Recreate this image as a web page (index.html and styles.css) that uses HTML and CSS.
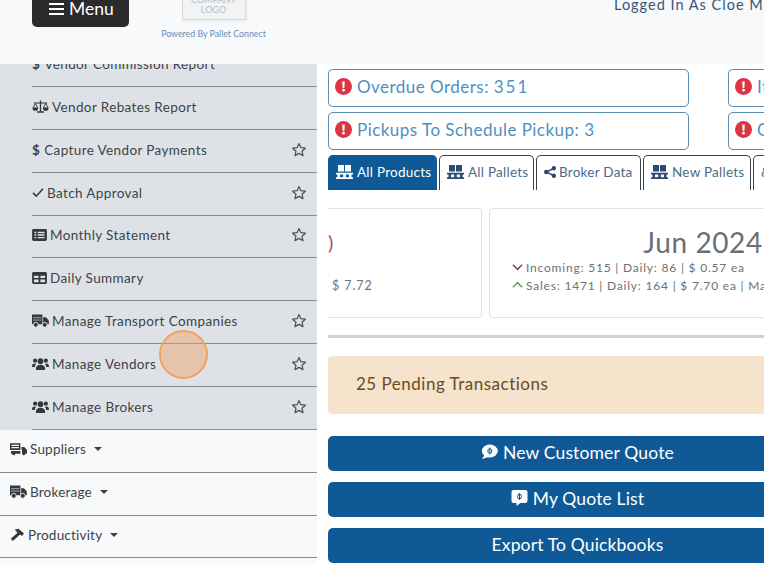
FILE: index.html
```html
<!DOCTYPE html>
<html>
<head>
<meta charset="utf-8">
<title>Dashboard</title>
<link rel="stylesheet" href="styles.css">
</head>
<body>
<svg class="defs" width="0" height="0">
<symbol id="i-star" viewBox="0 0 16 16"><path d="M8 1.600l1.900 4.100 4.500.5-3.400 3 1 4.400L8 11.400l-4 2.200 1-4.400-3.400-3 4.500-.5z" fill="none" stroke="currentColor" stroke-width="1.200" stroke-linejoin="round"/></symbol>
<symbol id="i-scale" viewBox="0 0 18 14"><path d="M8.300 0h1.400v11.500h3V13H5.300v-1.500h3z M2 2.200h14v1.100H2z" fill="currentColor"/><path d="M3.500 3L1 8h5z M14.500 3L12 8h5z" fill="none" stroke="currentColor" stroke-width="1"/><path d="M.5 8h6a3 3 0 0 1-6 0z M11.500 8h6a3 3 0 0 1-6 0z" fill="currentColor"/></symbol>
<symbol id="i-check" viewBox="0 0 14 12"><path d="M1.200 6.500l3.800 3.800 7.800-8.600" fill="none" stroke="currentColor" stroke-width="1.900"/></symbol>
<symbol id="i-list" viewBox="0 0 16 13"><path fill-rule="evenodd" d="M1.500 0h13A1.500 1.500 0 0 1 16 1.500v10a1.500 1.500 0 0 1-1.500 1.500h-13A1.500 1.500 0 0 1 0 11.500v-10A1.500 1.500 0 0 1 1.500 0z M2.500 3v1.500h2V3z M6 3v1.500h7.500V3z M2.500 5.800v1.500h2V5.800z M6 5.800v1.500h7.500V5.800z M2.500 8.600v1.500h2V8.600z M6 8.600v1.500h7.500V8.600z" fill="currentColor"/></symbol>
<symbol id="i-table" viewBox="0 0 16 13"><path fill-rule="evenodd" d="M1.500 0h13A1.500 1.500 0 0 1 16 1.500v10a1.500 1.500 0 0 1-1.500 1.500h-13A1.500 1.500 0 0 1 0 11.500v-10A1.500 1.500 0 0 1 1.500 0z M2 4v2.500h5V4z M9 4v2.500h5V4z M2 8v3h5V8z M9 8v3h5V8z" fill="currentColor"/></symbol>
<symbol id="i-truck" viewBox="0 0 18 14"><path d="M0 0h11v10.500H0z M11.800 3h3l3 3.500v4h-6z" fill="currentColor"/><path d="M1 3.500h9M1 6h9" stroke="#dee2e6" stroke-width=".7"/><circle cx="4" cy="11" r="2.600" fill="currentColor" stroke="#dee2e6"/><circle cx="13.500" cy="11" r="2.600" fill="currentColor" stroke="#dee2e6"/></symbol>
<symbol id="i-users" viewBox="0 0 18 14"><circle cx="3.300" cy="3.500" r="2.200"/><circle cx="14.700" cy="3.500" r="2.200"/><circle cx="9" cy="4" r="3"/><path d="M0 9.800c0-2.200 1-3.300 2.500-3.300.8 0 1.300.2 1.800.6C3.500 8 3 9 3 10.200H.5z M18 9.800c0-2.200-1-3.300-2.500-3.300-.8 0-1.300.2-1.800.6.800.9 1.300 1.900 1.300 3.100h2.500z M4 12.400c0-2.900 1.900-4.700 5-4.700s5 1.800 5 4.700c0 .6-.4 1-1 1H5c-.6 0-1-.4-1-1z"/></symbol>
<symbol id="i-dolly" viewBox="0 0 18 14"><path fill-rule="evenodd" d="M0 1h11v7H0z M1.500 2.500v1.200h8V2.500z M1.500 5v1.200h8V5z" fill="currentColor"/><path d="M1 9h10v3H1z M12 5h3l3 3v4h-5z" fill="currentColor"/><circle cx="4" cy="12" r="1.600" fill="currentColor"/><circle cx="14.500" cy="12" r="1.600" fill="currentColor"/></symbol>
<symbol id="i-hammer" viewBox="0 0 16 14"><path d="M5 1.500l4-.7 6 5-2.200 2.700-2-1.600L3 14 .8 11.700 8 5z" fill="currentColor"/></symbol>
<symbol id="i-alert" viewBox="0 0 16 16"><circle cx="8" cy="8" r="8" fill="#dc3545"/><path d="M6.800 3.300h2.400l-.4 6H7.200z" fill="#fff"/><circle cx="8" cy="11.500" r="1.300" fill="#fff"/></symbol>
<symbol id="i-pallet" viewBox="0 0 17 14"><path d="M2 0h6v6.500H2z M9 0h6v6.500H9z M0 7.800h17v1.700H0z M0 12.300h17V14H0z M1.500 9.500H4v2.800H1.500z M7.200 9.500h2.600v2.800H7.200z M13 9.500h2.500v2.800H13z" fill="currentColor"/></symbol>
<symbol id="i-share" viewBox="0 0 12 12"><circle cx="9.800" cy="2.300" r="2.200"/><circle cx="9.800" cy="9.700" r="2.200"/><circle cx="2.300" cy="6" r="2.300"/><path d="M2.300 6l7.500-3.700M2.300 6l7.500 3.700" stroke="currentColor" stroke-width="1.400"/></symbol>
<symbol id="i-quote" viewBox="0 0 17 15"><ellipse cx="8.800" cy="6.500" rx="8" ry="6.500" fill="#fff"/><path d="M4 10L.8 14.500 8 12.500z" fill="#fff"/><path d="M8.800 3v7" stroke="#0f5a96" stroke-width="1"/><ellipse cx="8.800" cy="6.500" rx="2" ry="2.300" fill="none" stroke="#0f5a96" stroke-width="1"/></symbol>
<symbol id="i-quotebox" viewBox="0 0 16 16"><path d="M2 0h12a2 2 0 0 1 2 2v9a2 2 0 0 1-2 2H9l-4 3v-3H2a2 2 0 0 1-2-2V2a2 2 0 0 1 2-2z" fill="#fff"/><path d="M8 3v7" stroke="#0f5a96" stroke-width="1"/><ellipse cx="8" cy="6.500" rx="2" ry="2.300" fill="none" stroke="#0f5a96" stroke-width="1"/></symbol>
</svg>

<header class="topbar">
  <div class="brand-left">
    <button class="menu-btn"><span class="menu-bars"><i></i><i></i><i></i></span>Menu</button>
  </div>
  <div class="brand">
    <div class="logo">COMPANY<br>LOGO</div>
    <div class="powered">Powered By Pallet Connect</div>
  </div>
  <div class="login">Logged In As Cloe Miller</div>
</header>

<div class="page">
  <nav class="sidebar">
    <ul class="sub-list">
      <li class="sub-item"><span class="glyph">$</span>Vendor Commission Report</li>
      <li class="sub-item"><svg class="ic ic-w"><use href="#i-scale"/></svg>Vendor Rebates Report</li>
      <li class="sub-item"><span class="glyph">$</span>Capture Vendor Payments<svg class="star"><use href="#i-star"/></svg></li>
      <li class="sub-item"><svg class="ic ic-c"><use href="#i-check"/></svg>Batch Approval<svg class="star"><use href="#i-star"/></svg></li>
      <li class="sub-item"><svg class="ic ic-l"><use href="#i-list"/></svg>Monthly Statement<svg class="star"><use href="#i-star"/></svg></li>
      <li class="sub-item"><svg class="ic ic-l"><use href="#i-table"/></svg>Daily Summary</li>
      <li class="sub-item"><svg class="ic ic-w"><use href="#i-truck"/></svg>Manage Transport Companies<svg class="star"><use href="#i-star"/></svg></li>
      <li class="sub-item"><svg class="ic ic-w"><use href="#i-users"/></svg>Manage Vendors<svg class="star"><use href="#i-star"/></svg></li>
      <li class="sub-item"><svg class="ic ic-w"><use href="#i-users"/></svg>Manage Brokers<svg class="star"><use href="#i-star"/></svg></li>
    </ul>
    <ul class="top-list">
      <li class="top-item"><svg class="ic ic-w"><use href="#i-dolly"/></svg>Suppliers<span class="caret"></span></li>
      <li class="top-item"><svg class="ic ic-w"><use href="#i-truck"/></svg>Brokerage<span class="caret"></span></li>
      <li class="top-item"><svg class="ic ic-h"><use href="#i-hammer"/></svg>Productivity<span class="caret"></span></li>
    </ul>
  </nav>

  <main class="main">
    <div class="alerts">
      <a class="alert-link"><svg class="alert-ic"><use href="#i-alert"/></svg>Overdue Orders:<span class="num">351</span></a>
      <a class="alert-link"><svg class="alert-ic"><use href="#i-alert"/></svg>Items</a>
      <a class="alert-link"><svg class="alert-ic"><use href="#i-alert"/></svg>Pickups To Schedule Pickup:<span class="num">3</span></a>
      <a class="alert-link"><svg class="alert-ic"><use href="#i-alert"/></svg>Open</a>
    </div>

    <div class="tabs">
      <a class="tab tab-active tab-a"><svg class="tab-ic"><use href="#i-pallet"/></svg>All Products</a>
      <a class="tab tab-b"><svg class="tab-ic"><use href="#i-pallet"/></svg>All Pallets</a>
      <a class="tab tab-c"><svg class="tab-sh"><use href="#i-share"/></svg>Broker Data</a>
      <a class="tab tab-d"><svg class="tab-ic"><use href="#i-pallet"/></svg>New Pallets</a>
      <a class="tab tab-e">&amp;</a>
    </div>

    <div class="cards">
      <div class="card card-clip">
        <div class="card-paren">)</div>
        <div class="card-tail">$ 7.72</div>
      </div>
      <div class="card card-month">
        <div class="card-title">Jun 2024</div>
        <div class="card-line"><svg class="chev chev-down" viewBox="0 0 12 8"><path d="M1 1.500l5 5 5-5" fill="none" stroke="currentColor" stroke-width="1.700"/></svg>Incoming: 515 | Daily: 86 | $ 0.57 ea</div>
        <div class="card-line"><svg class="chev chev-up" viewBox="0 0 12 8"><path d="M1 6.500l5-5 5 5" fill="none" stroke="currentColor" stroke-width="1.700"/></svg>Sales: 1471 | Daily: 164 | $ 7.70 ea | Margin</div>
      </div>
    </div>

    <hr class="rule">

    <div class="pending">25 Pending Transactions</div>

    <a class="action"><svg class="action-ic"><use href="#i-quote"/></svg>New Customer Quote</a>
    <a class="action"><svg class="action-ic"><use href="#i-quotebox"/></svg>My Quote List</a>
    <a class="action">Export To Quickbooks</a>
  </main>
</div>

<div class="tap-mark"></div>
</body>
</html>
```

FILE: styles.css
```css
html, body{
margin: 0;
height: 564px;
overflow: hidden;
}

body{
background-color: #fff;
font-family: "Lato", "Open Sans", sans-serif;
color: #343a40;
position: relative;
}

.defs{
display: block;
height: 0;
}

.topbar{
height: 64px;
background-color: #f8f9fa;
display: flex;
overflow: hidden;
box-sizing: border-box;
}

.brand-left{
width: 129px;
padding-left: 32px;
flex: none;
box-sizing: border-box;
margin-top: -10px;
}

.menu-btn{
display: flex;
align-items: center;
gap: 5px;
width: 97px;
height: 37px;
padding: 0 0 0 17px;
border: 0;
border-radius: 5px;
background-color: #2b2b2b;
color: #fff;
font-family: inherit;
font-size: 17.500px;
}

.menu-bars{
display: flex;
flex-direction: column;
gap: 3px;
width: 15px;
}

.menu-bars i{
display: block;
height: 2px;
background-color: #fff;
}

.brand{
width: 105px;
margin-left: 32px;
flex: none;
margin-top: -12px;
display: flex;
flex-direction: column;
align-items: center;
}

.logo{
width: 64px;
height: 32px;
box-sizing: border-box;
padding-top: 6px;
border: 1px solid #d5d9dc;
background-color: #f1f3f4;
color: #b5bcc0;
font-size: 9px;
line-height: 10px;
text-align: center;
box-shadow: 1px 1px 3px #e6e6e6;
flex: none;
}

.powered{
margin-top: 9px;
font-size: 8.800px;
line-height: 10px;
color: #6a8db5;
white-space: nowrap;
}

.login{
margin-left: 348px;
margin-top: -4px;
font-size: 14.500px;
line-height: 18px;
letter-spacing: 1px;
color: #36567a;
white-space: nowrap;
flex: none;
}

.page{
display: flex;
height: 500px;
}

.sidebar{
width: 317px;
flex: none;
display: flex;
flex-direction: column;
background-color: #f8f9fa;
overflow: hidden;
}

.sub-list, .top-list{
list-style: none;
margin: 0;
padding: 0;
}

.sub-list{
height: 366px;
background-color: #dee2e6;
padding-left: 32px;
box-sizing: border-box;
display: flex;
flex-direction: column;
justify-content: flex-end;
flex: none;
}

.sub-item, .top-item{
display: flex;
align-items: center;
font-size: 13.500px;
letter-spacing: .38px;
color: #3d4347;
white-space: nowrap;
box-sizing: border-box;
border-bottom: 1.500px solid #868b90;
}

.sub-item{
height: 42.900px;
flex: none;
padding: 0 10px 2px 0;
}

.top-item{
height: 42.800px;
padding: 0 0 3px 10px;
letter-spacing: .2px;
}

.glyph{
font-weight: 700;
margin-right: 4px;
}

.ic{
flex: none;
margin-right: 3px;
color: #33383c;
fill: #33383c;
}

.ic-w{
width: 17px;
height: 14px;
}

.ic-c{
width: 12px;
height: 11px;
}

.ic-l{
width: 15px;
height: 12px;
}

.ic-h{
width: 15px;
height: 13px;
}

.star{
width: 16px;
height: 16px;
margin-left: auto;
color: #4a4f54;
flex: none;
}

.caret{
width: 0;
height: 0;
margin-left: 8px;
border-left: 4px solid transparent;
border-right: 4px solid transparent;
border-top: 4px solid #3d4347;
}

.main{
flex: 1;
overflow: hidden;
padding: 5px 0 0 11px;
min-width: 0;
}

.main > *{
width: 499px;
box-sizing: border-box;
}

.alerts{
display: grid;
grid-template-columns: 361px 361px;
gap: 5px 39px;
}

.alert-link{
display: flex;
align-items: center;
height: 38px;
padding: 0 0 3px 6px;
box-sizing: border-box;
border: 1px solid #5f8db0;
border-radius: 5px;
background-color: #fff;
color: #4f8fc0;
font-size: 17px;
letter-spacing: .47px;
white-space: nowrap;
box-shadow: 0 0 1px #cfe3f2;
}

.num{
margin-left: 5px;
letter-spacing: 1.900px;
}

.alert-ic{
width: 17px;
height: 17px;
margin-right: 5px;
flex: none;
}

.tabs{
display: flex;
gap: 2px;
margin-top: 5px;
height: 35px;
}

.tab{
display: flex;
align-items: center;
padding: 0 0 2px 7px;
box-sizing: border-box;
flex: none;
border: 1px solid #3c4246;
border-bottom: 0;
border-radius: 5px 5px 0 0;
font-size: 13.500px;
letter-spacing: .25px;
color: #4a6a8a;
white-space: nowrap;
}

.tab-active{
background-color: #0f5a96;
border-color: #0f5a96;
color: #fff;
}

.tab-a{
width: 109px;
}

.tab-b{
width: 95px;
}

.tab-c{
width: 105px;
}

.tab-d{
width: 108px;
}

.tab-e{
width: 60px;
}

.tab-ic{
width: 17px;
height: 14px;
margin-right: 4px;
flex: none;
}

.tab-sh{
width: 12px;
height: 12px;
margin-right: 3px;
fill: currentColor;
flex: none;
}

.tab-b .tab-ic, .tab-d .tab-ic, .tab-c .tab-sh{
color: #2c4a6e;
}

.cards{
display: flex;
gap: 7px;
margin-top: 18px;
height: 110px;
}

.card{
flex: none;
box-sizing: border-box;
border: 1px solid #dfe1e3;
border-radius: 4px;
background-color: #fff;
}

.card-clip{
width: 154px;
border-left: 0;
border-radius: 0 4px 4px 0;
}

.card-paren{
margin-top: 19px;
font-size: 20px;
line-height: 28px;
color: #b5476a;
}

.card-tail{
margin-top: 22px;
padding-left: 4px;
font-size: 12.500px;
line-height: 16px;
letter-spacing: .9px;
color: #6d7175;
}

.card-month{
width: 428px;
padding: 17px 22px 0;
}

.card-title{
text-align: center;
font-size: 28px;
line-height: 32px;
letter-spacing: .6px;
color: #6b6f73;
}

.card-line{
display: flex;
align-items: center;
height: 18px;
font-size: 12px;
letter-spacing: .8px;
color: #6d7175;
white-space: nowrap;
}

.chev{
width: 11px;
height: 8px;
margin-right: 3px;
flex: none;
}

.chev-down{
color: #8f3f4f;
}

.chev-up{
color: #6f9a76;
}

.rule{
margin: 17px 0 0;
border: 0;
height: 3px;
background-color: #cfd1d3;
}

.pending{
margin-top: 18px;
height: 58px;
padding: 0 0 4px 28px;
display: flex;
align-items: center;
border-radius: 4px;
background-color: #f5e3cb;
color: #6b4a22;
font-size: 17px;
letter-spacing: .5px;
}

.action{
display: flex;
align-items: center;
justify-content: center;
height: 35px;
margin-top: 11px;
padding-bottom: 3px;
border-radius: 5px;
background-color: #0f5a96;
color: #fff;
font-size: 17.500px;
letter-spacing: .15px;
white-space: nowrap;
}

.pending + .action{
margin-top: 22px;
}

.action-ic{
width: 17px;
height: 16px;
margin-right: 5px;
flex: none;
}

.tap-mark{
position: absolute;
left: 159px;
top: 330px;
width: 49px;
height: 49px;
box-sizing: border-box;
border: 2px solid #eda263;
border-radius: 50%;
background-color: rgba(238, 160, 100, .45);
}
```
